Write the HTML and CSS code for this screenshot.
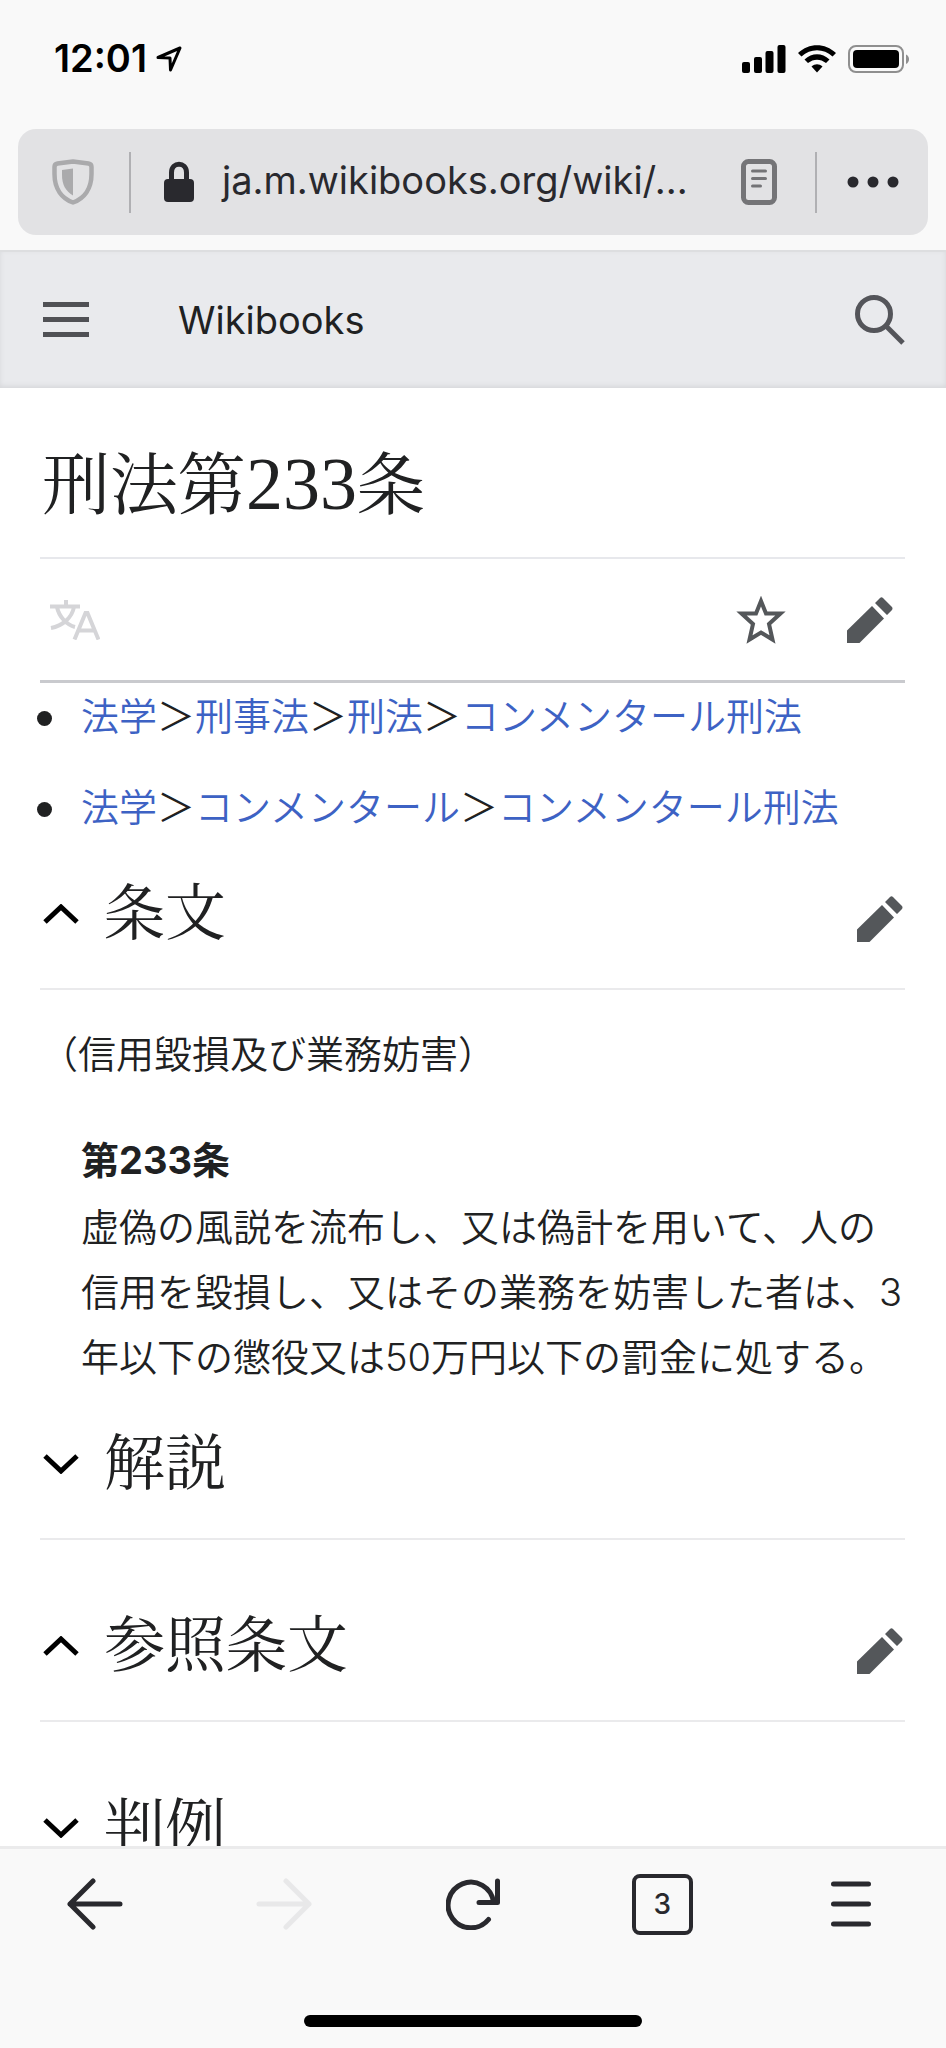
FILE: index.html
```html
<!DOCTYPE html>
<html lang="ja">
<head>
<meta charset="utf-8">
<meta name="viewport" content="width=device-width, initial-scale=1">
<title>刑法第233条 - Wikibooks</title>
<link rel="stylesheet" href="styles.css">
</head>
<body>
<div class="screen">
  <header class="browser-top">
    <div class="status-bar">
      <div class="status-time">
        <time>12:01</time>
        <svg width="26" height="26" viewBox="0 0 26 26" fill="none" stroke="#000" stroke-width="3" stroke-linejoin="round"><path d="M2 11.5 24 2 14.500 24 14 12z"/></svg>
      </div>
      <div class="status-icons">
        <svg width="44" height="28" viewBox="0 0 44 28"><rect x="0" y="17" width="8" height="11" rx="2"/><rect x="12" y="12" width="8" height="16" rx="2"/><rect x="23.500" y="6" width="8" height="22" rx="2"/><rect x="35.500" y="0" width="8" height="28" rx="2"/></svg>
        <svg width="38" height="28" viewBox="0 0 38 28"><path d="M0 8C11-2.500 27-2.500 38 8L34.500 11.500C25.500 3 12.500 3 3.500 11.500Z"/><path d="M6.500 14.500C14 7.500 24 7.500 31.500 14.500L28 18C22.500 13.500 15.500 13.500 10 18Z"/><path d="M13.500 21.500C17 18.500 21 18.500 24.500 21.500L19 27.500Z"/></svg>
        <svg width="62" height="28" viewBox="0 0 62 28"><rect x="1" y="1" width="54" height="26" rx="7" fill="none" stroke="#8f8f8f" stroke-width="2"/><rect x="5" y="5" width="46" height="18" rx="4"/><path d="M58 9.500c4 1.500 4 8 0 9.500z" fill="#8f8f8f"/></svg>
      </div>
    </div>
    <div class="url-bar">
      <button class="plain shield" aria-label="トラッキング防止">
        <svg width="42" height="46" viewBox="0 0 42 46"><path d="M21 2.500 36.500 4.500Q39.500 5 39.500 8V15C39.500 30 32 39.500 21 43.500C10 39.500 2.500 30 2.500 15V8Q2.500 5 5.500 4.500Z" fill="none" stroke="#aaaaac" stroke-width="4.500" stroke-linejoin="round"/><path d="M21 9.500V36.500C13.500 32 10 25.500 10 16V11Z" fill="#aaaaac"/></svg>
      </button>
      <span class="divider"></span>
      <a class="address" href="#">
        <svg width="30" height="42" viewBox="0 0 30 42"><path d="M7.500 21V11.500C7.500 .5 22.500 .5 22.500 11.500V21" fill="none" stroke="#29292e" stroke-width="5"/><rect y="18" width="30" height="23" rx="4" fill="#29292e"/></svg>
        <span>ja.m.wikibooks.org/wiki/...</span>
      </a>
      <button class="plain reader" aria-label="リーダー表示">
        <svg width="36" height="46" viewBox="0 0 36 46" fill="none" stroke="#747477"><rect x="2.500" y="2.500" width="31" height="41" rx="5" stroke-width="5"/><path d="M11.500 12h13M11.500 19.500h13M11.500 27h8" stroke-width="3" stroke-linecap="round"/></svg>
      </button>
      <span class="divider"></span>
      <button class="plain more" aria-label="ページ操作">
        <svg width="52" height="12" viewBox="0 0 52 12" fill="#29292e"><circle cx="6" cy="6" r="5.500"/><circle cx="26" cy="6" r="5.500"/><circle cx="46" cy="6" r="5.500"/></svg>
      </button>
    </div>
  </header>

  <div class="site-header">
    <button class="plain" aria-label="メニュー">
      <svg width="46" height="36" viewBox="0 0 46 36" fill="#505155"><rect y="0" width="46" height="5"/><rect y="15" width="46" height="5"/><rect y="30" width="46" height="5"/></svg>
    </button>
    <a class="brand" href="#">Wikibooks</a>
    <button class="plain" aria-label="検索">
      <svg width="50" height="50" viewBox="0 0 50 50" fill="none" stroke="#54555a" stroke-width="5"><circle cx="19" cy="19" r="16.500"/><path d="M30.500 30.500 48 48"/></svg>
    </button>
  </div>

  <main class="article">
    <h1 class="title">刑法第<span class="numeral">233</span>条</h1>
    <div class="actions">
      <button class="plain language" aria-label="言語">
        <svg width="50" height="40" viewBox="0 0 50 40" fill="none" stroke="#d5d5d8" stroke-width="4"><path d="M0 6.500h30M16 0v6M7 7c2 10 10 18 18 20M24 7c-2 11-12 19-23 21"/><path d="M24.500 39.500 35.500 13h2L48.500 39.500M28.500 30.500h16"/></svg>
      </button>
      <button class="plain" aria-label="ウォッチ">
        <svg width="50" height="48" viewBox="0 0 50 48" fill="none" stroke="#54575a" stroke-width="4"><path d="M25 5 30 17.500H44.500L33 28 36.500 43.500 25 36.500 13.500 43.500 17 28 5.500 17.500H20Z"/></svg>
      </button>
      <button class="plain" aria-label="編集"><svg class="pencil" width="46" height="46" viewBox="0 0 46 46"><path d="M0 33.500V46H12.500L37 21.500 25 9ZM28 6 33 1Q34.500-.5 36 1L45 10Q46 11.500 45 13L40 18Z"/></svg></button>
    </div>

    <ul class="crumbs">
      <li><span><a href="#">法学</a>＞<a href="#">刑事法</a>＞<a href="#">刑法</a>＞<a href="#">コンメンタール刑法</a></span></li>
      <li><span><a href="#">法学</a>＞<a href="#">コンメンタール</a>＞<a href="#">コンメンタール刑法</a></span></li>
    </ul>

    <div class="heading">
      <svg width="36" height="20" viewBox="0 0 36 20" class="chevron"><path d="M2 18 18 3 34 18"/></svg>
      <h2>条文</h2>
      <button class="plain edit" aria-label="条文を編集"><svg class="pencil" width="46" height="46" viewBox="0 0 46 46"><path d="M0 33.500V46H12.500L37 21.500 25 9ZM28 6 33 1Q34.500-.5 36 1L45 10Q46 11.500 45 13L40 18Z"/></svg></button>
    </div>
    <div class="section-body">
      <p>（信用毀損及び業務妨害）</p>
      <dl>
        <dt>第233条</dt>
        <dd>虚偽の風説を流布し、又は偽計を用いて、人の信用を毀損し、又はその業務を妨害した者は、3年以下の懲役又は50万円以下の罰金に処する。</dd>
      </dl>
    </div>
    <div class="heading">
      <svg width="36" height="20" viewBox="0 0 36 20" class="chevron"><path d="M2 2 18 17 34 2"/></svg>
      <h2>解説</h2>
    </div>
    <div class="heading">
      <svg width="36" height="20" viewBox="0 0 36 20" class="chevron"><path d="M2 18 18 3 34 18"/></svg>
      <h2>参照条文</h2>
      <button class="plain edit" aria-label="参照条文を編集"><svg class="pencil" width="46" height="46" viewBox="0 0 46 46"><path d="M0 33.500V46H12.500L37 21.500 25 9ZM28 6 33 1Q34.500-.5 36 1L45 10Q46 11.500 45 13L40 18Z"/></svg></button>
    </div>
    <div class="heading">
      <svg width="36" height="20" viewBox="0 0 36 20" class="chevron"><path d="M2 2 18 17 34 2"/></svg>
      <h2>判例</h2>
    </div>
  </main>

  <footer class="toolbar">
    <nav class="toolbar-buttons">
      <button class="plain" aria-label="戻る"><svg width="56" height="52" viewBox="0 0 56 52" class="stroke"><path d="M26 3 3 26 26 49M3 26H53"/></svg></button>
      <button class="plain" aria-label="進む" disabled><svg width="56" height="52" viewBox="0 0 56 52" class="stroke faint"><path d="M30 3 53 26 30 49M53 26H3"/></svg></button>
      <button class="plain" aria-label="再読み込み"><svg width="54" height="52" viewBox="0 0 54 52" class="stroke"><path d="M42.500 41.500A22.800 22.800 0 1 1 47.500 24M51.500 3V24.500H33"/></svg></button>
      <button class="plain" aria-label="タブ"><span class="tab-count">3</span></button>
      <button class="plain" aria-label="メニュー"><svg width="40" height="46" viewBox="0 0 40 46" class="stroke"><path d="M2.500 3h35M2.500 23h35M2.500 43h35"/></svg></button>
    </nav>
    <div class="home-indicator"></div>
  </footer>
</div>
</body>
</html>
```

FILE: styles.css
```css
* { box-sizing: border-box; }

body {
  margin: 0;
  background: #fff;
  color: #202122;
  font: 38px/65px Inter, "Noto Sans CJK JP", sans-serif;
}

svg { display: block; flex: none; }
a { text-decoration: none; color: inherit; }
h1, h2, p, ul, dl, dd { margin: 0; padding: 0; }

.plain {
  display: flex;
  align-items: center;
  justify-content: center;
  padding: 0;
  border: 0;
  background: none;
  color: inherit;
  font: inherit;
}

.screen {
  display: flex;
  flex-direction: column;
  height: 100vh;
}

/* Browser chrome */
.browser-top {
  flex: none;
  padding: 0 18px 15px;
  background: #f9f9f9;
}

.status-bar {
  display: flex;
  align-items: center;
  justify-content: space-between;
  height: 129px;
  padding: 0 18px 12px 36px;
  color: #000;
}

.status-time {
  display: flex;
  align-items: center;
  gap: 9px;
  font-size: 38px;
  font-weight: 600;
}

.status-icons {
  display: flex;
  gap: 12px;
}

.url-bar {
  display: flex;
  align-items: center;
  height: 106px;
  padding: 0 29px 0 34px;
  border-radius: 18px;
  background: #e2e2e4;
  color: #29292e;
}

.divider {
  width: 2px;
  height: 61px;
  background: #b0b0b3;
}

.shield { margin-right: 35px; }

.address {
  display: flex;
  flex: 1;
  align-items: center;
  gap: 28px;
  margin-left: 33px;
}

.address span { padding-bottom: 4px; }

.reader { margin-right: 38px; }
.more { margin-left: 30px; }

/* Site header */
.site-header {
  display: flex;
  flex: none;
  align-items: center;
  height: 138px;
  padding: 0 41px 0 43px;
  border-top: 2px solid #dddee0;
  background: #e9eaed;
  box-shadow: inset 0 -2px 5px #d6d7da;
}

.brand {
  flex: 1;
  margin-left: 89px;
}

/* Article */
.article {
  flex: 1;
  min-height: 0;
  padding: 0 41px 0 40px;
  overflow: hidden;
}

.title, h2 {
  font-family: "Liberation Serif", "Noto Serif CJK JP", "Noto Sans CJK JP", serif;
  font-weight: 400;
}

.title {
  padding: 56px 0 28px 2px;
  border-bottom: 2px solid #e7e8ec;
  font-size: 68px;
  line-height: 85px;
}

.numeral {
  font-size: 74px;
  line-height: 1;
}

.actions {
  display: flex;
  align-items: center;
  gap: 61px;
  height: 124px;
  padding: 0 12px 0 10px;
  border-bottom: 3px solid #c9cace;
}

.language { margin-right: auto; }
.pencil { fill: #54575a; }

.crumbs {
  display: flex;
  flex-direction: column;
  gap: 26px;
  margin: 1px 0 24px;
  list-style: none;
  font-weight: 350;
}

.crumbs li {
  display: flex;
  align-items: center;
  gap: 29px;
  margin-left: -3px;
}

.crumbs li::before {
  content: "";
  width: 15px;
  height: 15px;
  margin-top: 4px;
  border-radius: 50%;
  background: #202122;
}

.crumbs a { color: #3d62c4; }

.heading {
  display: flex;
  align-items: center;
  gap: 25px;
  padding: 12px 2px 42px 3px;
  border-bottom: 2px solid #eaeaec;
}

.heading + .heading { margin-top: 56px; }

.chevron {
  margin-top: 6px;
  fill: none;
  stroke: #000;
  stroke-width: 5;
}

h2 {
  padding-top: 8px;
  font-size: 61px;
  line-height: 62px;
}

.edit {
  margin-top: 16px;
  margin-left: auto;
}

.section-body {
  padding: 32px 0 24px;
  font-weight: 350;
}

dl { margin: 41px 0 0 41px; }
dt { margin-bottom: 2px; font-weight: 700; }

/* Bottom toolbar */
.toolbar {
  display: flex;
  flex: none;
  flex-direction: column;
  align-items: center;
  padding-bottom: 21px;
  border-top: 3px solid #ebebec;
  background: #f9f9f9;
}

.toolbar-buttons {
  display: grid;
  grid-template-columns: repeat(5, 1fr);
  width: 100%;
  height: 110px;
  margin-bottom: 56px;
}

.stroke {
  fill: none;
  stroke: #29292e;
  stroke-width: 5;
  stroke-linecap: round;
  stroke-linejoin: round;
}

.faint { stroke: #e8e8e9; }

.tab-count {
  display: flex;
  align-items: center;
  justify-content: center;
  width: 61px;
  height: 61px;
  border: 4px solid #29292e;
  border-radius: 8px;
  color: #29292e;
  font-size: 28px;
  font-weight: 500;
}

.home-indicator {
  width: 338px;
  height: 12px;
  border-radius: 6px;
  background: #000;
}
```
